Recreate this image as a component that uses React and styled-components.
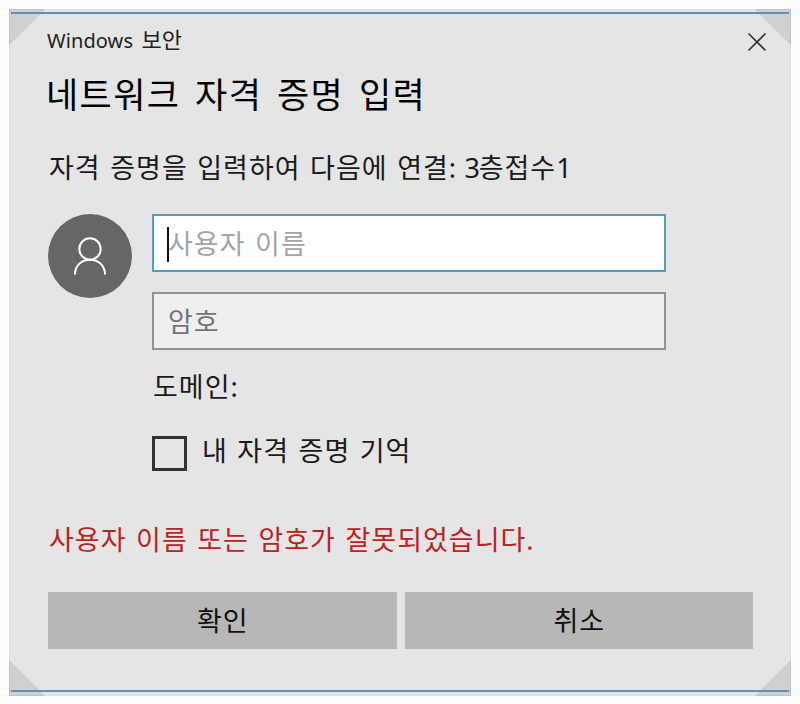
import React, { useState } from "react";
import styled, { createGlobalStyle } from "styled-components";

const GlobalStyle = createGlobalStyle`
  body {
    margin: 0;
    background: #fefefe;
    font-family: "Noto Sans", "Noto Sans CJK KR", sans-serif;
  }
`;

const Page = styled.div`
  box-sizing: border-box;
  width: 800px;
  height: 704px;
  padding: 9px 9px 8px;
`;

const Dialog = styled.div`
  position: relative;
  box-sizing: border-box;
  height: 687px;
  padding: 17px 37px 0 38px;
  background: #e5e5e5;
  border: 1px solid #dedede;
`;

const Edge = styled.div`
  position: absolute;
  left: 1px;
  right: 1px;
  height: 2px;
  background: #5794b5;
  ${(props) => (props.$side === "top" ? "top: 2px;" : "bottom: 3px;")}
`;

const Corner = styled.svg`
  position: absolute;
  width: 36px;
  height: 36px;
  ${(props) => (props.$bottom ? "bottom: -1px;" : "top: -1px;")}
  ${(props) => (props.$right ? "right: -1px;" : "left: -1px;")}
  transform: scale(
    ${(props) => (props.$right ? -1 : 1)},
    ${(props) => (props.$bottom ? -1 : 1)}
  );
`;

const TitleBar = styled.div`
  display: flex;
  justify-content: space-between;
  height: 28px;
`;

const Caption = styled.span`
  margin-left: -1px;
  font-size: 20px;
  line-height: 28px;
  letter-spacing: 0.1px;
  word-spacing: 3px;
  color: #222222;
`;

const CaptionKorean = styled.span`
  font-size: 22px;
  line-height: 1;
`;

const CloseButton = styled.button`
  width: 20px;
  height: 20px;
  margin: 5px -14px 0 0;
  padding: 0;
  border: none;
  background: none;
  svg {
    display: block;
  }
`;

const Heading = styled.h1`
  margin: 17px 0 0 -2px;
  font-size: 35px;
  font-weight: 400;
  line-height: 46px;
  letter-spacing: 1.4px;
  word-spacing: 4.2px;
  color: #000000;
  white-space: nowrap;
`;

const Text = styled.p`
  margin: 0;
  font-size: 27px;
  line-height: 36px;
  letter-spacing: 1px;
  word-spacing: 1.5px;
  color: ${(props) => (props.$error ? "#bb2222" : "#1a1a1a")};
  white-space: nowrap;
`;

const Message = styled(Text)`
  margin: 32px 0 0 1px;
`;

const Digit = styled.span`
  letter-spacing: -1.2px;
`;

const Credentials = styled.div`
  display: flex;
  gap: 20px;
  margin-top: 28px;
`;

const Avatar = styled.div`
  display: flex;
  flex: none;
  align-items: center;
  justify-content: center;
  width: 84px;
  height: 84px;
  border-radius: 50%;
  background: #666666;
`;

const Fields = styled.div`
  width: 514px;
`;

const Field = styled.div`
  display: flex;
  align-items: center;
  box-sizing: border-box;
  height: 58px;
  margin-bottom: 20px;
  padding: 2px 0 0 13px;
  border: 2px solid ${(props) => (props.$active ? "#5a9bc0" : "#949192")};
  background: ${(props) => (props.$active ? "#ffffff" : "#efefef")};
`;

const Caret = styled.span`
  width: 2px;
  height: 35px;
  margin-right: -2px;
  background: #111111;
`;

const Placeholder = styled(Text)`
  margin-left: 1px;
  color: ${(props) => (props.$active ? "#a3a3a3" : "#747474")};
`;

const Domain = styled(Text)`
  margin: -1px 0 0 1px;
`;

const Remember = styled.div`
  display: flex;
  gap: 15px;
  margin-top: 28px;
`;

const CheckBox = styled.span`
  box-sizing: border-box;
  width: 35px;
  height: 35px;
  margin-top: 3px;
  border: 3px solid #333333;
`;

const ErrorText = styled(Text)`
  margin: 51px 0 0 1px;
`;

const Buttons = styled.div`
  display: flex;
  gap: 8px;
  margin-top: 34px;
`;

const Button = styled.button`
  flex: none;
  width: 348.5px;
  height: 57px;
  padding: 0 0 0 1px;
  border: none;
  background: #b7b7b7;
  color: #111111;
  font-family: inherit;
  font-size: 27px;
  line-height: 36px;
  letter-spacing: 1px;
`;

const CornerMark = ({ right, bottom }) => (
  <Corner $right={right} $bottom={bottom} viewBox="0 0 36 36">
    <path d="M0 0H35L0 35Z" fill="#bcbcbc" fillOpacity="0.5" />
    <path d="M0.5 35V0.5H35L0.5 35" fill="none" stroke="#c0c0c0" />
  </Corner>
);

const App = () => {
  const [active] = useState("name");

  return (
    <Page>
      <GlobalStyle />
      <Dialog>
        <CornerMark />
        <CornerMark right />
        <CornerMark bottom />
        <CornerMark right bottom />
        <Edge $side="top" />
        <Edge $side="bottom" />
        <TitleBar>
          <Caption>
            Windows <CaptionKorean>{"보안"}</CaptionKorean>
          </Caption>
          <CloseButton aria-label="닫기">
            <svg width="20" height="20" viewBox="0 0 20 20" fill="none">
              <path
                d="M1.5 1.5L18.5 18.5M18.5 1.5L1.5 18.5"
                stroke="#333333"
                strokeWidth="1.6"
              />
            </svg>
          </CloseButton>
        </TitleBar>
        <Heading>{"네트워크 자격 증명 입력"}</Heading>
        <Message>
          {"자격 증명을 입력하여 다음에 연결"}
          <Digit>:</Digit> <Digit>3</Digit>
          {"층접수"}
          <Digit>1</Digit>
        </Message>
        <Credentials>
          <Avatar>
            <svg width="84" height="84" viewBox="0 0 84 84" fill="none">
              <circle cx="42" cy="35" r="10.7" stroke="#ffffff" strokeWidth="2" />
              <path
                d="M27 60.5C27 51.5 33.5 45.7 42 45.7C50.5 45.7 57 51.5 57 60.5"
                stroke="#ffffff"
                strokeWidth="2"
              />
            </svg>
          </Avatar>
          <Fields>
            <Field $active={active === "name"}>
              <Caret />
              <Placeholder $active>{"사용자 이름"}</Placeholder>
            </Field>
            <Field $active={active === "password"}>
              <Placeholder>{"암호"}</Placeholder>
            </Field>
            <Domain>{"도메인:"}</Domain>
            <Remember>
              <CheckBox />
              <Text>{"내 자격 증명 기억"}</Text>
            </Remember>
          </Fields>
        </Credentials>
        <ErrorText $error>{"사용자 이름 또는 암호가 잘못되었습니다."}</ErrorText>
        <Buttons>
          <Button>{"확인"}</Button>
          <Button>{"취소"}</Button>
        </Buttons>
      </Dialog>
    </Page>
  );
};

export default App;
